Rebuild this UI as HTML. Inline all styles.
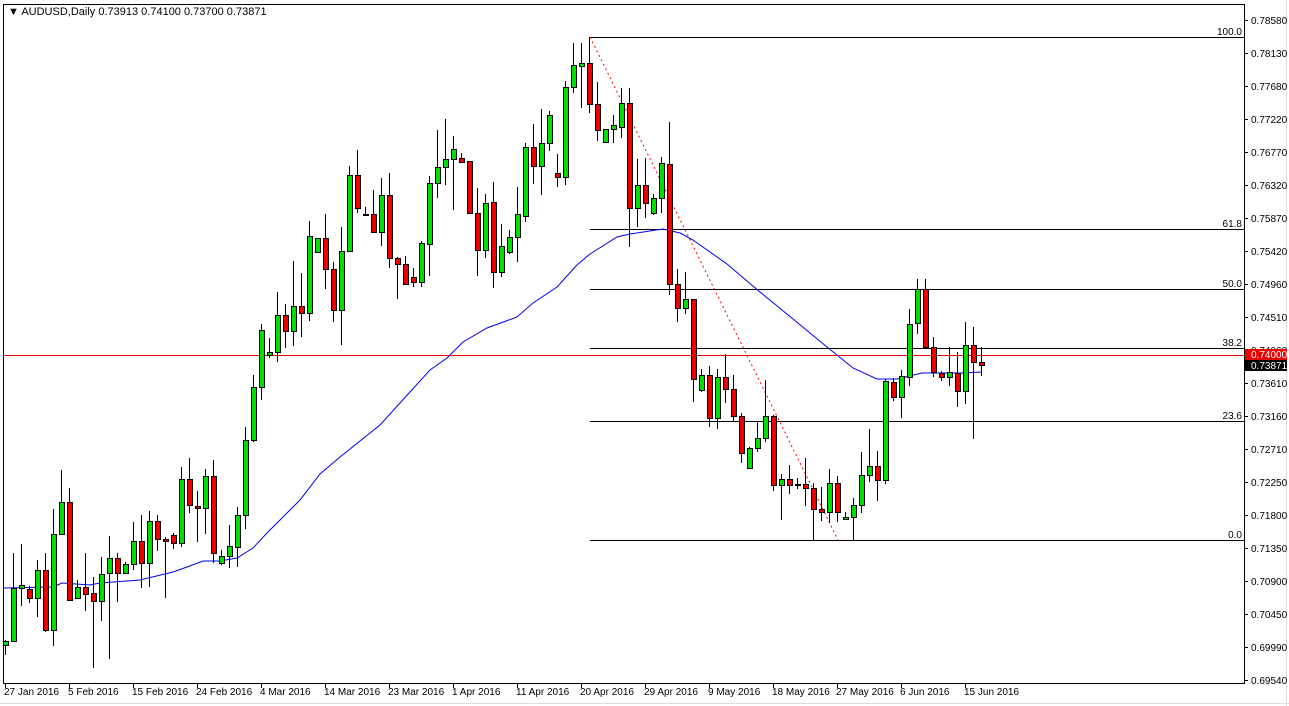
<!DOCTYPE html>
<html><head><meta charset="utf-8"><style>
html,body{margin:0;padding:0;background:#fff;width:1289px;height:706px;overflow:hidden}
svg{display:block}
text{font-family:"Liberation Sans",sans-serif;font-size:10px;fill:#000}
</style></head><body>
<svg id="s" width="1289" height="706" xmlns="http://www.w3.org/2000/svg">
<rect x="0" y="0" width="1289" height="706" fill="#fff"/>
<line x1="0" y1="703.5" x2="1289" y2="703.5" stroke="#ddd"/>
<line x1="1286.5" y1="0" x2="1286.5" y2="706" stroke="#ddd"/>
<rect x="3.5" y="4.5" width="1241" height="679" fill="none" stroke="#000"/>
<g id="fib" stroke="#000" stroke-width="1">
<line x1="590" y1="37.5" x2="1244" y2="37.5"/>
<line x1="590" y1="229.5" x2="1244" y2="229.5"/>
<line x1="590" y1="289.5" x2="1244" y2="289.5"/>
<line x1="590" y1="348.5" x2="1244" y2="348.5"/>
<line x1="590" y1="421.5" x2="1244" y2="421.5"/>
<line x1="590" y1="540.5" x2="1244" y2="540.5"/>
</g>
<text x="1242" y="35" text-anchor="end">100.0</text>
<text x="1242" y="227" text-anchor="end">61.8</text>
<text x="1242" y="287" text-anchor="end">50.0</text>
<text x="1242" y="346" text-anchor="end">38.2</text>
<text x="1242" y="419" text-anchor="end">23.6</text>
<text x="1242" y="538" text-anchor="end">0.0</text>
<line x1="590" y1="37" x2="838" y2="540" stroke="#f00" stroke-dasharray="2,3"/>
<line x1="4" y1="355.5" x2="1244" y2="355.5" stroke="#e00"/>
<polyline fill="none" stroke="#0000ee" stroke-width="1" points="4,588 53,587 62,583 90,585 100,583 140,580 173,572 187,567 203,561 220,561 237,558 253,548 267,533 300,500 320,474 340,457 380,425 410,392 430,370 447,358 463,342 487,328 517,317 533,303 557,287 577,265 590,254 617,237 630,234 663,229 680,233 693,240 727,264 760,292 793,319 827,347 853,368 877,379 897,379 922,373 960,373 982,372"/>
<g id="c"></g>
<text x="8" y="15" style="font-size:11px">▼ AUDUSD,Daily  0.73913 0.74100 0.73700 0.73871</text>
<g id="ax"></g>
</svg>
<script>
var C=[[5,645,641,640,655],[13,641,588,553,642],[21,588,585,544,606],[29,589,598,586,603],[37,598,570,560,617],[45,570,630,553,632],[53,630,534,509,646],[61,534,502,470,534],[69,502,600,488,600],[77,598,587,580,599],[85,587,594,553,611],[93,593,601,577,668],[101,601,574,557,621],[109,573,558,536,659],[117,558,573,553,602],[125,573,564,562,574],[133,564,541,522,570],[141,541,563,515,588],[149,563,521,511,587],[157,521,539,515,551],[165,539,541,537,598],[173,535,543,533,549],[181,543,479,467,547],[189,479,505,458,513],[197,506,508,491,542],[205,508,476,469,534],[213,476,553,460,563],[221,563,556,550,565],[229,556,546,525,568],[237,547,515,507,567],[245,515,440,427,529],[253,440,387,375,442],[261,387,330,324,400],[269,355,352,338,358],[277,352,315,292,362],[285,315,331,304,348],[293,331,306,261,346],[301,306,313,273,337],[309,313,236,221,321],[317,252,238,238,252],[325,238,269,214,289],[333,269,310,262,322],[341,310,251,227,345],[349,251,175,166,251],[357,175,208,150,213],[365,214,215,207,216],[373,214,232,190,232],[381,232,195,178,246],[389,195,258,173,268],[397,258,264,257,299],[405,264,284,256,285],[413,277,282,268,287],[421,282,243,241,287],[429,244,183,176,276],[437,183,167,130,198],[445,167,159,119,185],[453,159,149,136,210],[461,158,162,153,163],[469,161,213,161,213],[477,213,250,188,276],[485,250,203,194,258],[493,202,272,182,288],[501,272,246,224,277],[509,252,237,230,254],[517,237,214,187,262],[525,216,147,143,222],[533,147,166,124,184],[541,166,143,109,195],[549,143,115,111,151],[557,173,177,154,187],[565,177,87,81,185],[573,87,65,43,93],[581,66,63,43,108],[589,63,104,37,113],[597,104,130,82,141],[605,142,129,129,143],[613,129,125,115,143],[621,127,103,88,138],[629,103,208,88,247],[637,208,185,159,227],[645,185,203,158,218],[653,213,198,194,215],[661,198,163,157,213],[669,164,284,122,295],[677,284,308,269,322],[685,308,299,272,314],[693,299,379,299,402],[701,390,375,369,392],[709,375,418,366,427],[717,418,377,369,429],[725,377,389,354,403],[733,389,416,375,421],[741,416,453,413,463],[749,468,448,447,468],[757,448,438,422,452],[765,438,416,380,442],[773,416,485,415,491],[781,485,479,474,520],[789,479,485,465,494],[797,484,485,478,489],[805,484,488,458,506],[813,488,509,483,541],[821,509,512,487,521],[829,512,483,469,523],[837,483,512,476,522],[845,519,517,512,520],[853,517,505,498,541],[861,505,475,452,513],[869,475,466,429,482],[877,466,480,451,501],[885,480,381,379,484],[893,382,397,378,401],[901,397,376,370,418],[909,377,324,309,386],[917,323,289,279,334],[925,289,347,279,347],[933,347,372,337,377],[941,373,377,371,381],[949,377,372,347,386],[957,373,391,352,407],[965,391,345,322,404],[973,345,362,327,439],[981,362,365,347,376]];
var NS="http://www.w3.org/2000/svg",g=document.getElementById("c"),h="";
C.forEach(function(k){var x=k[0],o=k[1],c=k[2],hi=k[3],lo=k[4];var t=Math.min(o,c),b=Math.max(o,c);
var col=c<o?"#00e000":(c>o?"#ee0000":"#000");
h+='<line x1="'+(x+.5)+'" y1="'+hi+'" x2="'+(x+.5)+'" y2="'+lo+'" stroke="#000"/>';
if(b-t<1){h+='<line x1="'+(x-2)+'" y1="'+(t+.5)+'" x2="'+(x+3)+'" y2="'+(t+.5)+'" stroke="#000" stroke-width="2"/>';}
else h+='<rect x="'+(x-2+.5)+'" y="'+(t+.5)+'" width="5" height="'+(b-t)+'" fill="'+col+'" stroke="#000"/>';});
g.innerHTML=h;
var P=["0.78580","0.78130","0.77680","0.77220","0.76770","0.76320","0.75870","0.75420","0.74960","0.74510","0.74060","0.73610","0.73160","0.72710","0.72250","0.71800","0.71350","0.70900","0.70450","0.69990","0.69540"];
var a="";P.forEach(function(p,i){var y=20+i*33;a+='<line x1="1244" y1="'+(y+.5)+'" x2="1248" y2="'+(y+.5)+'" stroke="#000"/><text x="1251" y="'+(y+4)+'">'+p+'</text>';});
a+='<rect x="1245" y="349" width="42" height="11" fill="#ee0000"/><text x="1251" y="358" style="fill:#fff">0.74000</text>';
a+='<rect x="1245" y="360" width="42" height="11" fill="#000"/><text x="1251" y="369" style="fill:#fff">0.73871</text>';
var D=["27 Jan 2016","5 Feb 2016","15 Feb 2016","24 Feb 2016","4 Mar 2016","14 Mar 2016","23 Mar 2016","1 Apr 2016","11 Apr 2016","20 Apr 2016","29 Apr 2016","9 May 2016","18 May 2016","27 May 2016","6 Jun 2016","15 Jun 2016"];
D.forEach(function(d,i){var x=5+i*64;a+='<line x1="'+(x+.5)+'" y1="684" x2="'+(x+.5)+'" y2="688" stroke="#000"/><text x="'+(x-1)+'" y="695">'+d+'</text>';});
document.getElementById("ax").innerHTML=a;
</script>
</body></html>
